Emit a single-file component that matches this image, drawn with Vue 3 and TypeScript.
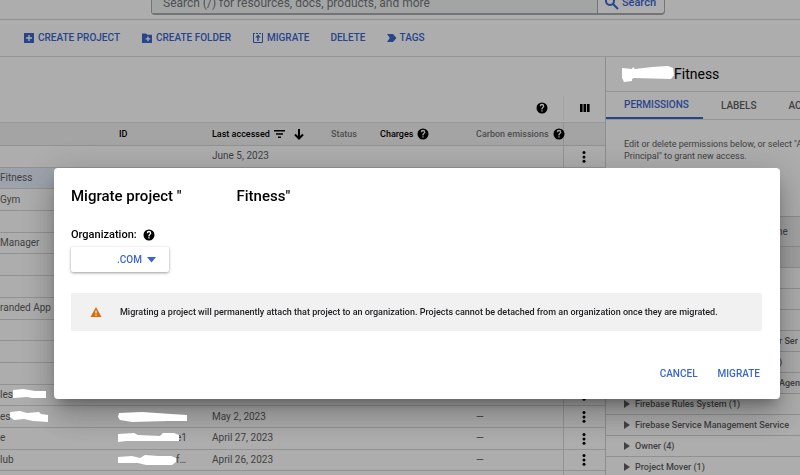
<script setup lang="ts">
import { ref } from 'vue'

interface Row {
  name?: string
  nameMask?: string
  id?: string
  idMask?: string
  accessed?: string
  carbon?: string
  selected?: boolean
}

const rows: Row[] = [
  { accessed: 'June 5, 2023' },
  { name: 'Fitness', selected: true },
  { name: 'Gym' },
  {},
  { name: 'Manager' },
  {},
  {},
  { name: 'randed App' },
  {},
  {},
  {},
  { name: 'les', nameMask: 'M0 1L10 0L22 2L33 2V9H19L14 8L0 9Z' },
  {
    name: 'es',
    nameMask: 'M0 1L10 0L17 2L29 1L31 3L38 4V11L23 10L14 8L4 9L0 6Z',
    idMask: 'M1 1L24 0L53 2L69 3V9H50L14 10L2 8L0 5Z',
    accessed: 'May 2, 2023',
    carbon: '—',
  },
  {
    idMask: 'M0 1L16 0L20 2L42 3L45 0H56L61 2V8L20 8L8 8L0 9Z',
    name: 'e',
    id: 'e1',
    accessed: 'April 27, 2023',
    carbon: '—',
  },
  {
    name: 'lub',
    idMask: 'M0 2L14 1L22 3L27 0L40 1H53L58 3V7L54 10H28L20 8L0 8Z',
    id: 'f…',
    accessed: 'April 26, 2023',
    carbon: '—',
  },
  {},
]

const roles = [
  { label: 'r Ser', tail: true },
  { label: ')', tail: true },
  { label: 'Agent', tail: true },
  { label: 'Firebase Rules System (1)', tail: false },
  { label: 'Firebase Service Management Service', tail: false },
  { label: 'Owner (4)', tail: false },
  { label: 'Project Mover (1)', tail: false },
]

const tabs = ['PERMISSIONS', 'LABELS', 'AC']
const activeTab = ref('PERMISSIONS')
const open = ref(true)

const helpPath =
  'M12 1a11 11 0 1 0 0 22 11 11 0 0 0 0-22zm1.200 18h-2.600v-2.600h2.600V19zm2.500-8.400-1.100 1.100c-.9.900-1.400 1.500-1.400 3.100h-2.600v-.6c0-1.200.5-2.200 1.300-3.100l1.400-1.400c.4-.4.600-.9.600-1.400a1.950 1.950 0 0 0-3.900 0H7.400a4.600 4.600 0 0 1 9.200 0c0 .9-.4 1.700-.9 2.300z'
</script>

<template>
  <div class="page">
    <header class="top">
      <form class="search" @submit.prevent>
        <input type="text" aria-label="Search" placeholder="Search (/) for resources, docs, products, and more" />
        <button type="submit">
          <svg width="14" height="14" viewBox="0 0 14 14"><circle cx="5" cy="5" r="4" /><path d="M8 8l5 5" /></svg>
          Search
        </button>
      </form>
    </header>

    <nav class="toolbar">
      <button type="button">
        <svg width="12" height="12" viewBox="0 0 12 12"><path fill-rule="evenodd" d="M1.500 1h9q.5 0 .5.500v9q0 .5-.5.500h-9q-.5 0-.5-.5v-9q0-.5.500-.5zM5.300 3v2.300H3v1.400h2.300V9h1.400V6.700H9V5.300H6.700V3z" /></svg>
        CREATE PROJECT
      </button>
      <button type="button">
        <svg width="12" height="12" viewBox="0 0 12 12"><path fill-rule="evenodd" d="M1 1.500h4l1.200 1.300H11V11H1zM6.300 4.500v1.700H4.600v1.300h1.700v1.700h1.300V7.500h1.700V6.200H7.600V4.500z" /></svg>
        CREATE FOLDER
      </button>
      <button type="button">
        <svg width="12" height="12" viewBox="0 0 12 12">
          <path class="edge" d="M1.500 1v9.500h9V1" /><path class="edge dots" d="M1 1.500h10" />
          <path d="M6 2.500L3.300 5.500h2V9h1.400V5.500h2z" />
        </svg>
        MIGRATE
      </button>
      <button type="button">DELETE</button>
      <button type="button">
        <svg width="10" height="10" viewBox="0 0 10 10"><path d="M0 1h6l3.500 4L6 9H0l2.800-4z" /></svg>
        TAGS
      </button>
    </nav>

    <div class="body">
      <main class="list">
        <div class="tools">
          <button type="button" class="icon" aria-label="Help">
            <svg width="12" height="12" viewBox="0 0 24 24"><path :d="helpPath" /></svg>
          </button>
          <button type="button" class="icon columns" aria-label="Columns">
            <svg width="10" height="10" viewBox="0 0 10 10"><path d="M0 1h2.600v8H0zM3.500 1h2.600v8H3.500zM7 1h2.600v8H7z" /></svg>
          </button>
        </div>
        <table>
          <colgroup>
            <col class="c-name" /><col class="c-id" /><col class="c-accessed" /><col class="c-status" />
            <col class="c-charges" /><col /><col class="c-menu" />
          </colgroup>
          <thead>
            <tr>
              <th></th>
              <th>ID</th>
              <th>
                <span class="head">Last accessed
                  <svg width="12" height="10" viewBox="0 0 12 10"><path d="M0 1h11v1.600H0zM2 4.200h7v1.600H2zM4 7.400h3V9H4z" /></svg>
                  <svg class="arrow" width="10" height="12" viewBox="0 0 10 12"><path d="M5 1v9M1 6.500l4 4 4-4" /></svg>
                </span>
              </th>
              <th class="muted">Status</th>
              <th>
                <span class="head">Charges
                  <svg width="12" height="12" viewBox="0 0 24 24"><path :d="helpPath" /></svg>
                </span>
              </th>
              <th class="muted">
                <span class="head">Carbon emissions
                  <svg width="12" height="12" viewBox="0 0 24 24"><path :d="helpPath" /></svg>
                </span>
              </th>
              <th class="menu"></th>
            </tr>
          </thead>
          <tbody>
            <tr v-for="(row, i) in rows" :key="i" :class="{ selected: row.selected }">
              <td>
                <span class="cell">{{ row.name }}<svg v-if="row.nameMask" class="mask" width="38" height="11" viewBox="0 0 38 11"><path :d="row.nameMask" /></svg></span>
              </td>
              <td>
                <span class="cell id"><svg v-if="row.idMask" class="mask" :class="{ short: row.id }" width="69" height="10" viewBox="0 0 69 10"><path :d="row.idMask" /></svg>{{ row.id }}</span>
              </td>
              <td>{{ row.accessed }}</td>
              <td></td>
              <td></td>
              <td>{{ row.carbon }}</td>
              <td class="menu">
                <button type="button" class="icon" aria-label="More actions">
                  <svg width="4" height="12" viewBox="0 0 4 12"><circle cx="2" cy="1.500" r="1.500" /><circle cx="2" cy="5.900" r="1.500" /><circle cx="2" cy="10.300" r="1.500" /></svg>
                </button>
              </td>
            </tr>
          </tbody>
        </table>
      </main>

      <aside class="panel">
        <h2>
          <svg class="mask" width="52" height="16" viewBox="0 0 52 16"><path d="M0 2L10 3L11 1L13 3L30 1L46 0L51 2L52 9L49 13L12 12L10 13V15L2 16L0 12Z" /></svg>Fitness
        </h2>
        <div class="tabs" role="tablist">
          <button
            v-for="tab in tabs"
            :key="tab"
            type="button"
            role="tab"
            :aria-selected="activeTab === tab"
            :class="{ active: activeTab === tab }"
            @click="activeTab = tab"
          >{{ tab }}</button>
        </div>
        <p>Edit or delete permissions below, or select "Add<br />Principal" to grant new access.</p>
        <div class="role-head">ne</div>
        <div class="role shade"></div>
        <div class="role"></div>
        <div class="role"></div>
        <div class="role"></div>
        <div v-for="role in roles" :key="role.label" class="role" :class="{ tail: role.tail }">
          <svg v-if="!role.tail" width="6" height="8" viewBox="0 0 6 8"><path d="M0 0l6 4-6 4z" /></svg>
          {{ role.label }}
        </div>
      </aside>
    </div>

    <div v-if="open" class="scrim">
      <section class="dialog" role="dialog" aria-modal="true" aria-labelledby="dialog-title">
        <h1 id="dialog-title"><span>Migrate project "</span><span>Fitness"</span></h1>
        <div class="org-label">
          <label for="org">Organization:</label>
          <svg width="12" height="12" viewBox="0 0 24 24"><path :d="helpPath" /></svg>
        </div>
        <div class="select">
          <select id="org"><option>.COM</option></select>
          <svg width="10" height="6" viewBox="0 0 10 6"><path d="M0 0h9L4.500 5.500z" /></svg>
        </div>
        <div class="alert">
          <svg width="12" height="10" viewBox="0 0 12 10"><path fill-rule="evenodd" d="M6 0l5.500 10H.5zM5.400 3.600v3h1.200v-3zm0 3.900v1.200h1.200V7.500z" /></svg>
          <span>Migrating a project will permanently attach that project to an organization. Projects cannot be detached from an organization once they are migrated.</span>
        </div>
        <footer>
          <button type="button" @click="open = false">CANCEL</button>
          <button type="button">MIGRATE</button>
        </footer>
      </section>
    </div>
  </div>
</template>

<style>
body {
  margin: 0;
  background: #fff;
}
</style>

<style scoped>
* {
  box-sizing: border-box;
}
.page {
  height: 100vh;
  display: flex;
  flex-direction: column;
  overflow: hidden;
  font: 10px/14px Roboto, sans-serif;
  color: #616161;
}
button,
input,
select {
  font: inherit;
  color: inherit;
  background: none;
  border: 0;
  padding: 0;
  margin: 0;
}
svg {
  flex: none;
  fill: currentColor;
}
.top {
  flex: none;
  height: 20px;
  display: flex;
  align-items: flex-end;
  padding: 0 135px 4px 151px;
  border-bottom: 1px solid #d4d4d4;
}
.search {
  flex: 1;
  display: flex;
  height: 24px;
  border: 1px solid #a8abb0;
  border-bottom-width: 2px;
  border-radius: 4px;
  font-size: 12px;
}
.search input {
  flex: 1;
  min-width: 0;
  padding: 0 11px;
  background: #f1f3f4;
}
.search input::placeholder {
  color: #73777b;
  opacity: 1;
}
.search button {
  display: flex;
  align-items: center;
  gap: 3px;
  padding: 0 8px 0 7px;
  border-left: 1px solid #a8abb0;
  font-size: 11px;
  font-weight: 500;
  color: #3b66cf;
}
.search svg {
  fill: none;
  stroke: currentColor;
  stroke-width: 2;
}
.toolbar {
  flex: none;
  height: 37px;
  display: flex;
  align-items: center;
  gap: 21px;
  padding: 0 23px;
  border-bottom: 1px solid #dcdcdc;
}
.toolbar button {
  display: flex;
  align-items: center;
  gap: 3px;
  font-weight: 500;
  color: #3b66cf;
}
.edge {
  fill: none;
  stroke: currentColor;
  stroke-width: 1;
}
.dots {
  stroke-dasharray: 2 1;
}
.body {
  flex: 1;
  min-height: 0;
  display: flex;
}
.list {
  flex: 1;
  min-width: 0;
}
.tools {
  height: 65px;
  display: flex;
  justify-content: flex-end;
  align-items: flex-end;
  padding-bottom: 2px;
}
.icon {
  display: inline-flex;
  align-items: center;
  justify-content: center;
  color: #000;
}
.tools .icon {
  height: 24px;
  width: 42px;
}
.tools .columns {
  border-left: 1px solid #ededed;
}
table {
  width: 100%;
  height: 371px;
  table-layout: fixed;
  border-collapse: collapse;
}
.c-name,
.c-accessed {
  width: 119px;
}
.c-id {
  width: 93px;
}
.c-status {
  width: 49px;
}
.c-charges {
  width: 96px;
}
.c-menu {
  width: 42px;
}
th,
td {
  padding: 0;
  text-align: left;
  white-space: nowrap;
  line-height: 14px;
  border-bottom: 1px solid #d8d8d8;
}
th {
  height: 23px;
  font-size: 9px;
  font-weight: 500;
  color: #000;
  background: #f2f2f2;
  border-top: 1px solid #e0e0e0;
}
th.muted {
  color: #757575;
}
.muted svg {
  color: #000;
}
.head {
  display: flex;
  align-items: center;
  gap: 4px;
}
.arrow {
  margin-left: 4px;
  fill: none;
  stroke: currentColor;
  stroke-width: 2;
}
.menu {
  text-align: center;
  border-left: 1px solid #d8d8d8;
}
.menu .icon {
  vertical-align: middle;
}
.selected td {
  background: #e8f0fe;
}
.cell {
  display: flex;
  align-items: center;
}
.id {
  margin-left: -1px;
}
.mask {
  position: relative;
  z-index: 2;
  fill: #fff;
}
.short {
  margin-right: -11px;
}
.panel {
  flex: none;
  width: 195px;
  overflow: hidden;
  border-left: 1px solid #d0d0d0;
  white-space: nowrap;
}
h2 {
  display: flex;
  align-items: center;
  height: 35px;
  margin: 0;
  padding-left: 16px;
  border-bottom: 1px solid #dcdcdc;
  font-size: 14px;
  font-weight: 400;
  color: #000;
}
.tabs {
  display: flex;
  height: 28px;
  border-bottom: 1px solid #dcdcdc;
}
.tabs button {
  flex: none;
  padding: 0 14px 0 18px;
  font-weight: 500;
}
.tabs .active {
  color: #3b66cf;
  border-bottom: 2px solid #3b66cf;
}
p {
  height: 96px;
  margin: 0;
  padding: 18px 18px 0;
  font-size: 9px;
  line-height: 12px;
}
.role-head {
  height: 31px;
  padding: 8px 0 0 171px;
  border-top: 1px solid #d0d0d0;
  border-bottom: 1px solid #d0d0d0;
  background: #f2f2f2;
}
.role {
  display: flex;
  align-items: center;
  gap: 5px;
  height: 21px;
  padding-left: 18px;
  border-bottom: 1px solid #d4d4d4;
  font-size: 9px;
  font-weight: 500;
}
.shade {
  background: #ededed;
}
.tail {
  padding-left: 173px;
}
.scrim {
  position: fixed;
  inset: 0;
  z-index: 1;
  padding: 168px 20px 0 54px;
  background: rgba(0, 0, 0, 0.32);
}
.dialog {
  padding: 18px 18px 18px 17px;
  border-radius: 4px;
  background: #fff;
  color: #202124;
  box-shadow: 0 8px 12px -5px rgba(0, 0, 0, 0.3), 0 18px 30px 1px rgba(0, 0, 0, 0.16), 0 7px 36px 6px rgba(0, 0, 0, 0.14);
}
h1 {
  display: flex;
  gap: 55px;
  margin: 0 0 22px;
  font-size: 15px;
  line-height: 20px;
  font-weight: 500;
  color: #000;
}
.org-label {
  display: flex;
  align-items: center;
  gap: 6px;
  height: 14px;
  font-size: 11px;
  font-weight: 500;
  color: #000;
}
.select {
  position: relative;
  width: 98px;
  margin: 5px 0 21px;
  color: #3b66cf;
}
.select select {
  display: block;
  width: 100%;
  height: 25px;
  padding-left: 46px;
  appearance: none;
  border-radius: 2px;
  font-weight: 500;
  box-shadow: 0 1px 3px rgba(0, 0, 0, 0.4);
}
.select svg {
  position: absolute;
  right: 12px;
  top: 10px;
  pointer-events: none;
}
.alert {
  display: flex;
  align-items: center;
  gap: 18px;
  padding: 12px 12px 12px 19px;
  border-radius: 2px;
  background: #f1f1f1;
  font-size: 9px;
  font-weight: 500;
}
.alert svg {
  color: #d96d0c;
}
footer {
  display: flex;
  justify-content: flex-end;
  gap: 20px;
  padding: 36px 2px 0 0;
}
footer button {
  font-weight: 500;
  color: #3b66cf;
}
</style>
